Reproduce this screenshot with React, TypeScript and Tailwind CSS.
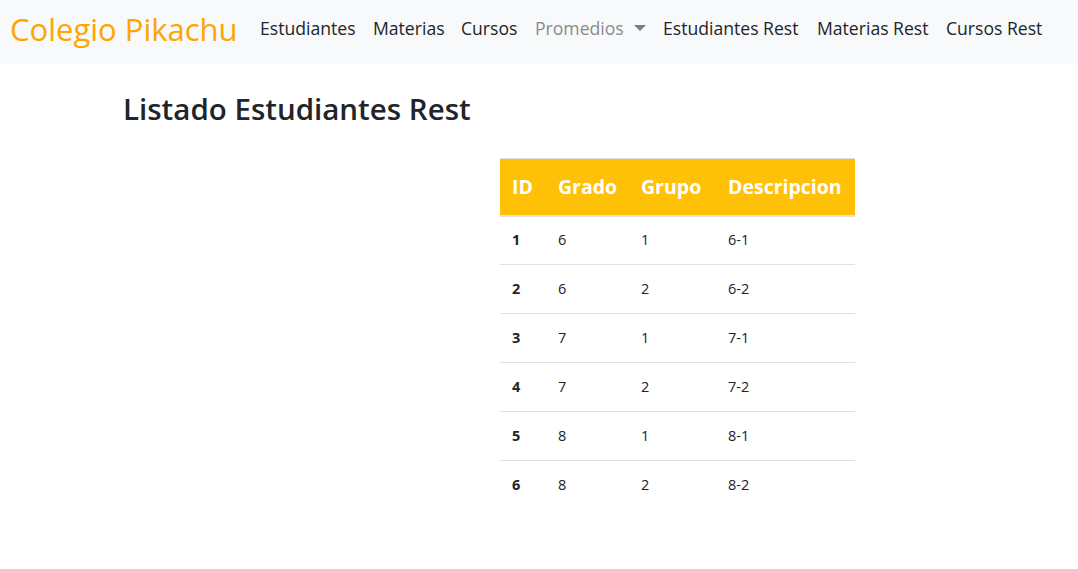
import React from "react";

const rows = [
  ["1", "6", "1", "6-1"],
  ["2", "6", "2", "6-2"],
  ["3", "7", "1", "7-1"],
  ["4", "7", "2", "7-2"],
  ["5", "8", "1", "8-1"],
  ["6", "8", "2", "8-2"],
];

export default function App() {
  return (
    <div className="min-h-screen bg-white font-['Open_Sans',sans-serif] text-[#212529]">
      <nav className="h-16 bg-[#f8f9fa] flex items-center pl-[10px]">
        <span className="text-[31px] leading-none text-[#ffa500] w-[250px] whitespace-nowrap pb-[6px]">Colegio Pikachu</span>
        <div className="flex items-center text-[17.6px] whitespace-nowrap pb-[8px]">
          <span className="w-[113px]">Estudiantes</span>
          <span className="w-[88px]">Materias</span>
          <span className="w-[74px]">Cursos</span>
          <span className="w-[128px] flex items-center text-[#8a8b8c]">
            Promedios
            <span className="ml-[10px] mt-[1px] w-0 h-0 border-l-[6px] border-r-[6px] border-t-[6px] border-l-transparent border-r-transparent border-t-[#7b7c7d]" />
          </span>
          <span className="w-[154px]">Estudiantes Rest</span>
          <span className="w-[129px]">Materias Rest</span>
          <span>Cursos Rest</span>
        </div>
      </nav>
      <div className="pl-[123px] pt-[27px]">
        <h2 className="text-[29.5px] font-semibold leading-[36px]">Listado Estudiantes Rest</h2>
        <table className="ml-[377px] mt-[31px] w-[355px] border-collapse border-t border-[#dee2e6]">
          <thead>
            <tr className="bg-[#ffc107] text-white text-[19.5px] font-bold h-[57px] border-b-2 border-[#dee2e6]">
              <th className="text-left pl-[12px] w-[46px]">ID</th>
              <th className="text-left pl-[12px] w-[83px]">Grado</th>
              <th className="text-left pl-[12px] w-[87px]">Grupo</th>
              <th className="text-left pl-[12px]">Descripcion</th>
            </tr>
          </thead>
          <tbody className="text-[14.5px]">
            {rows.map((r, i) => (
              <tr key={i} className={`h-[49px] ${i < rows.length - 1 ? "border-b border-[#dee2e6]" : ""}`}>
                <td className="pl-[12px] font-bold">{r[0]}</td>
                <td className="pl-[12px]">{r[1]}</td>
                <td className="pl-[12px]">{r[2]}</td>
                <td className="pl-[12px]">{r[3]}</td>
              </tr>
            ))}
          </tbody>
        </table>
      </div>
    </div>
  );
}
